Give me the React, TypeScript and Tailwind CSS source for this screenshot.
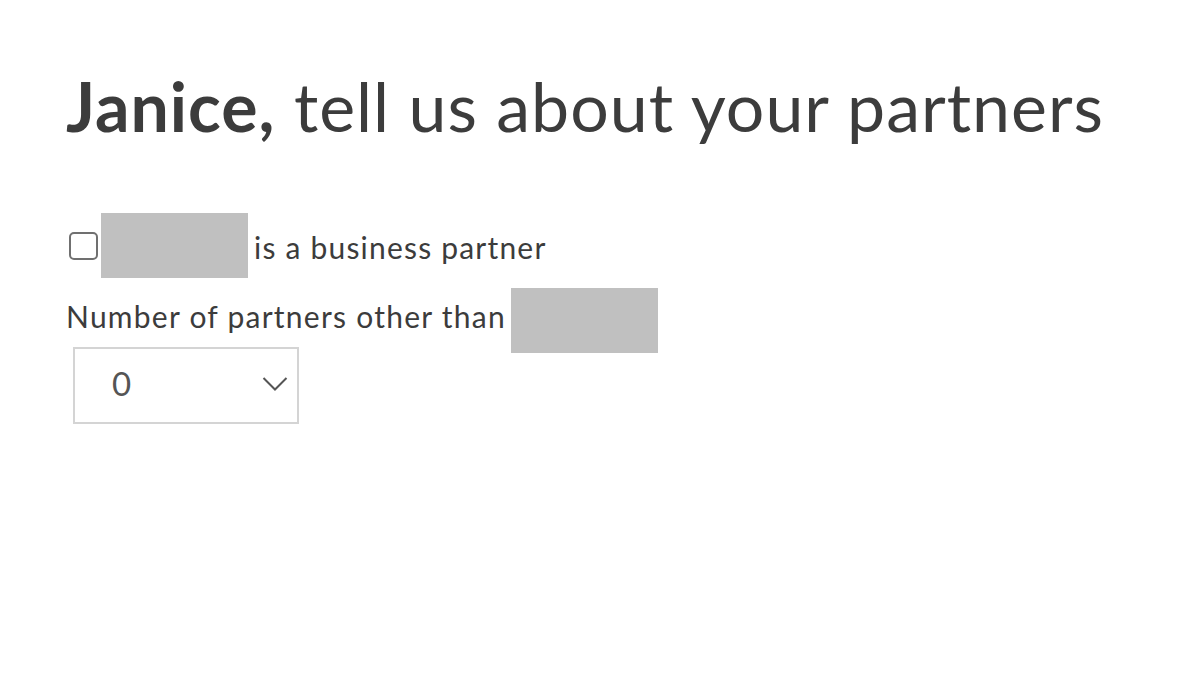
import React from 'react';

const Redacted: React.FC = () => (
  <span className="block w-[147px] h-[65px] bg-[#c0c0c0]" />
);

export default function App() {
  return (
    <div className="min-h-[700px] bg-white text-[#3c3c3c] font-['Lato',sans-serif] pl-[66px] pt-[66px]">
      <h1 className="text-[68px] leading-[80px] tracking-[1px] font-normal">
        <span className="font-bold">Janice,</span> tell us about your partners
      </h1>

      <div className="mt-[67px] flex items-start">
        <span className="mt-[19px] ml-[3px] w-[29px] h-[28px] rounded-[5px] border-2 border-[#707070] bg-white" />
        <span className="ml-[3px]">
          <Redacted />
        </span>
        <span className="mt-[16px] ml-[6px] text-[30px] leading-[36px] tracking-[1.2px]">
          is a business partner
        </span>
      </div>

      <div className="mt-[10px] flex items-start">
        <span className="mt-[10px] text-[30px] leading-[36px] tracking-[1.25px]">
          Number of partners other than
        </span>
        <span className="ml-[5px]">
          <Redacted />
        </span>
      </div>

      <div className="ml-[7px] mt-[-6px] w-[226px] h-[77px] border-2 border-[#d4d4d4] flex items-center justify-between pl-[37px] pr-[9px]">
        <span className="text-[33px] text-[#555] mt-[-3px]">0</span>
        <svg width="26" height="16" viewBox="0 0 26 16" fill="none" className="mt-[-4px]">
          <path d="M1.5 2 L13 13.5 L24.5 2" stroke="#555" strokeWidth="2" />
        </svg>
      </div>
    </div>
  );
}
